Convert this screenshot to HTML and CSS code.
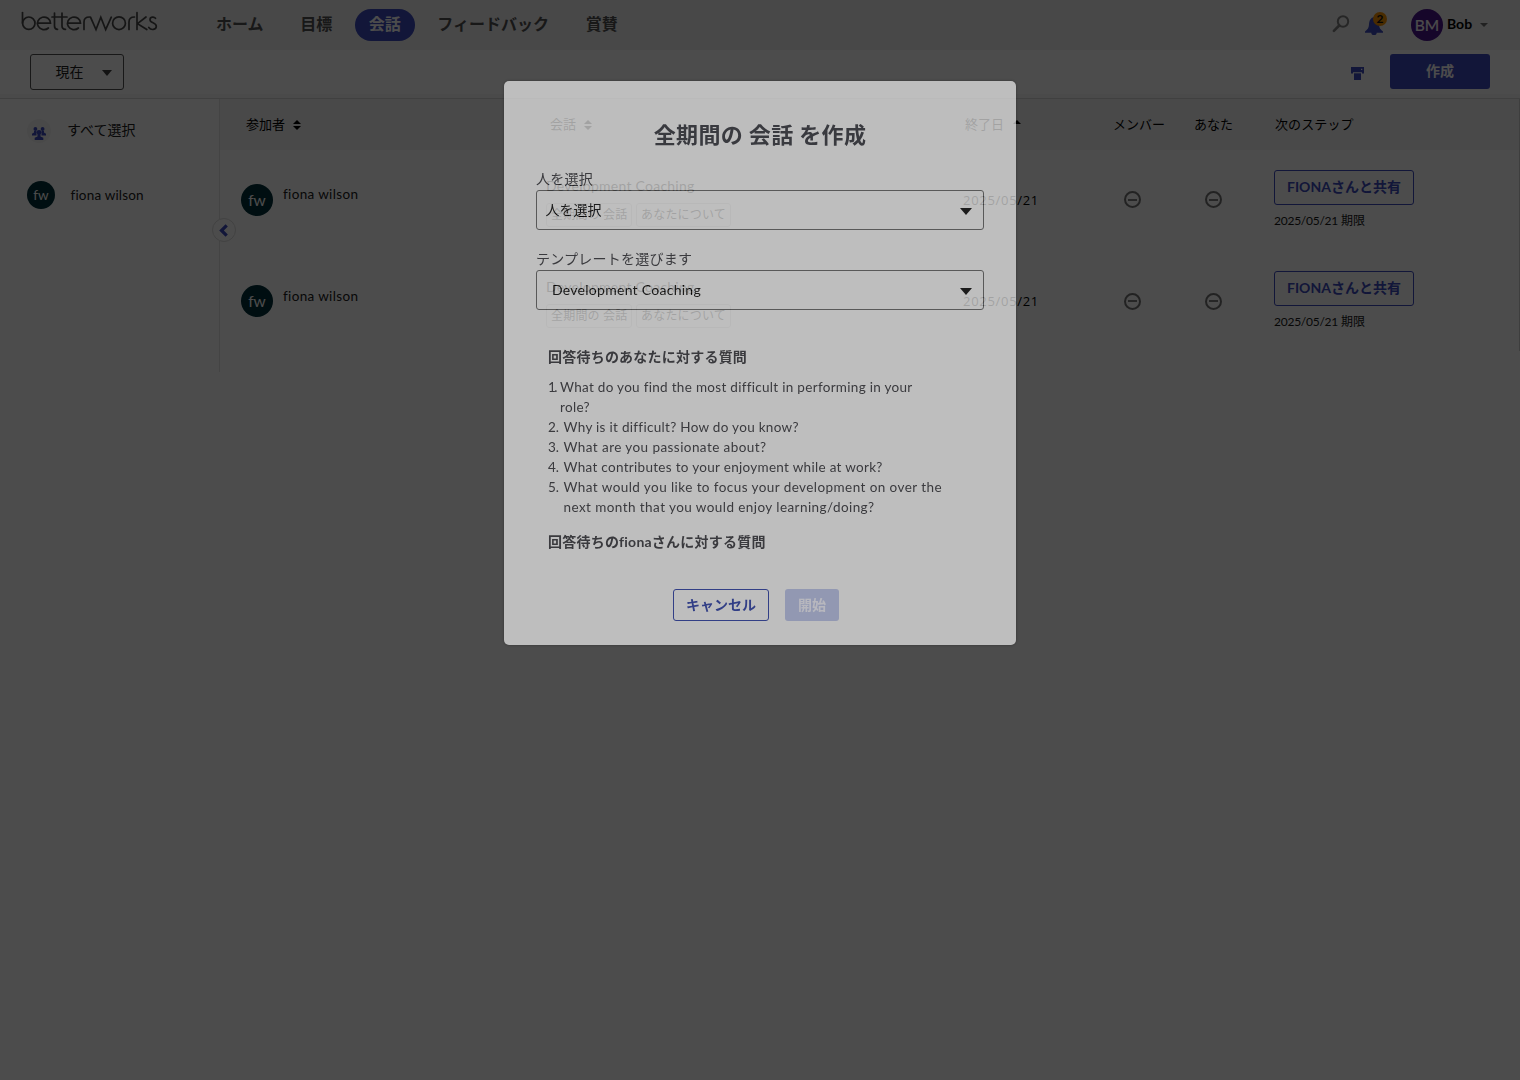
FILE: index.html
```html
<!DOCTYPE html>
<html lang="ja">
<head>
<meta charset="utf-8">
<title>betterworks</title>
<link rel="stylesheet" href="styles.css">
</head>
<body>
<div class="page">
  <header class="topbar">
    <svg class="logo" viewBox="0 0 138 24" width="138" height="24" aria-label="betterworks" fill="none" stroke="currentColor" stroke-width="1.7" stroke-linecap="round">
      <path d="M1.500 2.500V13"/><circle cx="7.800" cy="13.200" r="6.200"/>
      <path d="M16.300 13.200H29.500A6.500 6.300 0 1 0 27.400 18"/>
      <path d="M33.500 3V16Q33.500 19.300 36.500 19.300M31 7H46M41 3V16Q41 19.300 44.500 19.300"/>
      <path d="M46.500 13.200H59.500A6.500 6.300 0 1 0 57.400 18"/>
      <path d="M63 19.500V12Q63 7 68.500 7"/>
      <path d="M69.500 7.200L75 19.500L79.800 7.200L84.700 19.500L90.300 7.200"/>
      <circle cx="98" cy="13.200" r="6.400"/>
      <path d="M108 19.500V12Q108 7 113.500 7"/>
      <path d="M116 2.500V19.500M125 7L116.500 13.600L125.800 19.500"/>
      <path d="M134.500 8.300C133 6.400 129 6.700 129 9.700C129 13.300 135.300 12.400 135.300 16.300C135.300 20 130 20.600 127.800 17.500"/>
    </svg>
    <nav class="nav">
      <a class="nav-item">ホーム</a>
      <a class="nav-item">目標</a>
      <a class="nav-item active">会話</a>
      <a class="nav-item">フィードバック</a>
      <a class="nav-item">賞賛</a>
    </nav>
    <div class="tools">
      <svg class="search" width="18" height="18" viewBox="0 0 18 18" fill="none" stroke="currentColor"><circle cx="11" cy="6.500" r="5.200" stroke-width="2"/><path d="M7.200 10.500L1.900 15.800" stroke-width="2.600" stroke-linecap="round"/></svg>
      <div class="bell">
        <svg width="20" height="20" viewBox="0 0 20 20" fill="currentColor"><path d="M10 1C6.300 2 5.300 5 5 8.500C4.700 12.500 3.500 13.200 1 15.500V16.800H19V15.500C16.500 13.200 15.300 12.500 15 8.500C14.700 5 13.700 2 10 1ZM7.300 16.500A2.700 2.600 0 0 0 12.700 16.500Z"/></svg>
        <span class="count">2</span>
      </div>
      <span class="avatar avatar-bm">BM</span>
      <span class="user">Bob</span>
      <span class="caret caret-small"></span>
    </div>
  </header>
  <div class="toolbar">
    <button class="period"><span class="lift">現在</span><span class="caret"></span></button>
    <div class="toolbar-right">
      <svg class="print" width="13" height="13" viewBox="0 0 13 13" fill="currentColor"><path fill-rule="evenodd" d="M0 0H13V6.500H11V5.200H2V6.500H0ZM10 1.800V3.100H11.300V1.800Z"/><rect x="3" y="6.300" width="7" height="6.700"/></svg>
      <button class="create">作成</button>
    </div>
  </div>
  <main class="main">
    <aside class="side">
      <div class="side-all">
        <span class="group"><svg width="14" height="13" viewBox="0 0 14 13" fill="currentColor"><circle cx="3.400" cy="2" r="1.900"/><circle cx="10.600" cy="2" r="1.900"/><circle cx="7" cy="5.300" r="2.400"/><path d="M0 8.500V6.800L2 5.500V4H4.500V8.500ZM14 8.500V6.800L12 5.500V4H9.500V8.500ZM2.700 13V10.800L5.500 9.600V7H8.500V9.600L11.300 10.800V13Z"/></svg></span>
        <span class="side-label">すべて選択</span>
      </div>
      <div class="side-person"><span class="avatar avatar-small">fw</span><span class="person-name">fiona wilson</span></div>
      <span class="collapse"><svg width="10" height="13" viewBox="0 0 10 13" fill="none" stroke="currentColor" stroke-width="3.200"><path d="M7.700 1.300L2.500 6.500L7.700 11.700"/></svg></span>
    </aside>
    <section class="table">
      <div class="row head">
        <div class="c-part">参加者<i class="sort"></i></div>
        <div class="c-talk">会話<i class="sort"></i></div>
        <div class="c-end">終了日<i class="sort asc"></i></div>
        <div class="c-member">メンバー</div>
        <div class="c-you">あなた</div>
        <div class="c-next">次のステップ</div>
      </div>
      <div class="row item">
        <div class="c-part"><span class="avatar">fw</span><span class="person-name">fiona wilson</span></div>
        <div class="c-talk"><div class="talk-name">Development Coaching</div><span class="tag">全期間の 会話</span><span class="tag">あなたについて</span></div>
        <div class="c-end">2025/05/21</div>
        <div class="c-member"><i class="minus"></i></div>
        <div class="c-you"><i class="minus"></i></div>
        <div class="c-next"><button class="share"><span class="share-name">FIONA</span>さんと共有</button><div class="due"><span class="due-date">2025/05/21</span> 期限</div></div>
      </div>
      <div class="row item">
        <div class="c-part"><span class="avatar">fw</span><span class="person-name">fiona wilson</span></div>
        <div class="c-talk"><div class="talk-name">Development Coaching</div><span class="tag">全期間の 会話</span><span class="tag">あなたについて</span></div>
        <div class="c-end">2025/05/21</div>
        <div class="c-member"><i class="minus"></i></div>
        <div class="c-you"><i class="minus"></i></div>
        <div class="c-next"><button class="share"><span class="share-name">FIONA</span>さんと共有</button><div class="due"><span class="due-date">2025/05/21</span> 期限</div></div>
      </div>
    </section>
  </main>
</div>
<div class="backdrop"></div>
<div class="modal">
  <h1 class="title">全期間の 会話 を作成</h1>
  <label class="field-label">人を選択</label>
  <div class="select"><span class="lift">人を選択</span><span class="caret"></span></div>
  <label class="field-label second">テンプレートを選びます</label>
  <div class="select template">Development Coaching<span class="caret"></span></div>
  <div class="questions">
    <h2 class="q-title">回答待ちのあなたに対する質問</h2>
    <ol class="q-list">
      <li class="q tight first"><span class="n">1.</span><span class="q-text">What do you find the most difficult in performing in your<br>role?</span></li>
      <li class="q tight"><span class="n">2.</span><span class="q-text">Why is it difficult? How do you know?</span></li>
      <li class="q"><span class="n">3.</span><span class="q-text">What are you passionate about?</span></li>
      <li class="q tight"><span class="n">4.</span><span class="q-text">What contributes to your enjoyment while at work?</span></li>
      <li class="q"><span class="n">5.</span><span class="q-text">What would you like to focus your development on over the<br>next month that you would enjoy learning/doing?</span></li>
    </ol>
    <h2 class="q-title">回答待ちの<span class="q-name">fiona</span>さんに対する質問</h2>
  </div>
  <div class="actions"><button class="cancel">キャンセル</button><button class="start">開始</button></div>
</div>
</body>
</html>
```
FILE: styles.css
```css
* { box-sizing: border-box; }
body { margin: 0; background: #fff; color: #000; font-family: Lato, "Noto Sans CJK JP", sans-serif; font-size: 14px; line-height: 20px; overflow: hidden; }
button { font: inherit; margin: 0; padding: 0; white-space: nowrap; }
.lift { padding-bottom: 1px; }
.page { width: 1520px; height: 1080px; }
.topbar { height: 50px; background: #f0f0f0; display: flex; align-items: flex-start; padding-left: 21px; }
.logo { margin-top: 10px; color: #484848; flex: none; }
.nav { display: flex; margin: 9px 0 0 43px; gap: 8.6px; }
.nav-item { height: 32px; padding: 0 14px; border-radius: 16px; font-size: 16px; line-height: 29px; font-weight: 700; color: #505050; white-space: nowrap; }
.active { background: #3c4bbe; color: #fff; }
.tools { display: flex; margin-left: auto; padding-right: 32px; }
.search { color: #808080; margin-top: 15px; }
.bell { position: relative; color: #3c4bbe; margin: 16px 0 0 14px; height: 20px; width: 20px; }
.count { position: absolute; left: 9px; top: -4px; width: 14px; height: 14px; border-radius: 50%; background: #f49000; color: #111; font-size: 12px; line-height: 14px; text-align: center; font-weight: 700; }
.avatar { width: 32px; height: 32px; border-radius: 50%; background: #00303a; color: #fff; font-size: 15.5px; line-height: 32px; text-align: center; flex: none; }
.avatar-bm { background: #4a148c; margin: 9px 0 0 27px; -webkit-text-stroke: .2px #fff; }
.user { font-weight: 700; margin: 14px 0 0 4px; width: 26px; }
.caret { width: 0; height: 0; border: 6px solid transparent; border-top: 7px solid currentColor; border-bottom: 0; flex: none; margin-top: 2px; }
.caret-small { border-width: 4px 4px 0; color: #707070; margin: 23px 0 0 7px; }
.toolbar { height: 49px; border-bottom: 1px solid #d8d8d8; box-shadow: inset 0 -4px #f8f8f8; display: flex; justify-content: space-between; padding: 4px 30px 0; }
.period { width: 94px; height: 36px; border: 1px solid #505050; border-radius: 3px; background: none; color: #202020; display: flex; align-items: center; justify-content: space-between; padding: 0 11.5px 0 24.5px; }
.period .caret { border-width: 6px 5px 0; color: #404040; margin-top: 1px; }
.toolbar-right { display: flex; gap: 26px; color: #3c4bbe; }
.print { margin-top: 13px; }
.create { width: 100px; height: 35px; background: #3c4bbe; border: 0; border-radius: 3px; color: #fff; font-weight: 700; line-height: 20px; padding-bottom: 2px; }
.main { display: flex; height: 273px; }
.side { width: 220px; border-right: 1px solid #e4e4e4; position: relative; padding: 20px 0 0 27px; }
.side-all { display: flex; height: 62px; color: #202020; }
.group { width: 24px; height: 24px; border-radius: 50%; background: #f4f4f4; color: #3c4bbe; display: flex; justify-content: center; padding-top: 8px; }
.side-label { margin: 1px 0 0 16px; line-height: 20px; }
.side-person { display: flex; }
.avatar-small { width: 28px; height: 28px; font-size: 13.5px; line-height: 28px; }
.side-person .person-name { margin: 4px 0 0 15.5px; letter-spacing: .18px; }
.person-name { letter-spacing: .35px; font-size: 13.5px; color: #202020; white-space: nowrap; }
.collapse { position: absolute; left: 212px; top: 119px; width: 24px; height: 24px; border: 1px solid #dcdcdc; border-radius: 50%; background: #fff; color: #3c4bbe; display: flex; align-items: center; justify-content: center; }
.table { width: 1300px; height: 252px; border-right: 1px solid #d0d0d0; }
.row { display: grid; grid-template-columns: 326px 409px 150px 86px 83px 1fr; }
.head { height: 51px; background: #f4f4f4; font-size: 13px; line-height: 50px; }
.head .c-part { padding-left: 26px; }
.head .c-talk { padding-left: 4px; }
.head .c-end { padding-left: 10px; }
.head .c-member { padding-left: 8px; }
.head .c-you { padding-left: 3px; }
.head .c-next { padding-left: 1px; letter-spacing: .1px; }
.sort { display: inline-flex; flex-direction: column; gap: 2px; margin: 0 0 2px 7.5px; vertical-align: middle; }
.sort::before, .sort::after { content: ""; border: 4.5px solid transparent; border-bottom: 4.5px solid #000; border-top: 0; }
.sort::after { border-top: 4.5px solid #000; border-bottom: 0; }
.asc { margin-left: 9px; }
.asc::after { visibility: hidden; }
.item { height: 101.25px; }
.item .c-part { display: flex; padding: 34px 0 0 21px; }
.item .c-part .person-name { margin: 0.3px 0 0 10px; }
.item .c-talk { padding-top: 26px; }
.talk-name { letter-spacing: .25px; margin-bottom: 7px; }
.tag { display: inline-block; height: 24px; line-height: 22px; font-size: 12px; letter-spacing: .2px; border: 1px solid #c8c8c8; border-radius: 3px; padding: 0 4px; margin-right: 3.5px; }
.item .c-end { padding: 40px 0 0 8px; font-family: "Open Sans", sans-serif; font-size: 13px; letter-spacing: .7px; }
.item .c-member, .item .c-you { padding: 41.3px 0 0 19px; }
.item .c-you { padding-left: 14px; }
.minus { display: flex; width: 17px; height: 17px; border: 2px solid #747474; border-radius: 50%; align-items: center; justify-content: center; }
.minus::before { content: ""; width: 9px; height: 2px; background: #808080; }
.item .c-next { padding-top: 20px; }
.share { width: 140px; height: 35px; border: 1px solid #3c4bbe; border-radius: 3px; background: none; color: #3c4bbe; font-weight: 700; line-height: 20px; padding-bottom: 2px; }
.due { font-size: 12px; line-height: 20px; margin-top: 6px; color: #181818; white-space: nowrap; }
.due-date { letter-spacing: -.25px; }
.backdrop { position: fixed; inset: 0; background: rgba(0,0,0,.7); }
.modal { position: fixed; left: 504px; top: 81px; width: 512px; height: 564px; background: #fff; border-radius: 5px; opacity: .635; box-shadow: 0 0 3px rgba(0,0,0,.5); padding: 36px 32px 0; color: #303036; }
.title { margin: 0 0 43px; height: 20px; font-size: 22px; line-height: 36px; letter-spacing: .35px; text-align: center; font-weight: 700; color: #30313a; }
.field-label { display: block; height: 10px; line-height: 0; margin-top: -1px; padding-bottom: 11px; letter-spacing: .23px; }
.select { height: 40px; border: 1px solid #606060; border-radius: 3px; display: flex; justify-content: space-between; align-items: center; padding: 0 11px 0 8.5px; color: #000; }
.second { margin-top: 29px; }
.template { padding-left: 15px; letter-spacing: .27px; }
.questions { padding: 37px 12px 0; }
.q-title { margin: 0; font-size: 14px; font-weight: 700; line-height: 20px; letter-spacing: .22px; white-space: nowrap; }
.q-list { list-style: none; padding: 0; margin: 10px 0 15px; font-size: 13.5px; letter-spacing: .43px; }
.q { display: flex; gap: 3.5px; white-space: nowrap; }
.tight { letter-spacing: .3px; }
.n { width: 12px; letter-spacing: 0; }
.first .n { width: 8.5px; letter-spacing: -1.5px; }
.actions { display: flex; gap: 16px; margin: 37px 0 0 137px; }
.cancel, .start { height: 32px; border-radius: 3px; font-weight: 700; line-height: 28px; }
.cancel { width: 96px; border: 1px solid #2438a8; color: #2438a8; background: none; }
.start { width: 54px; border: 0; background: #bac4ec; color: #f4f4ff; }
```
